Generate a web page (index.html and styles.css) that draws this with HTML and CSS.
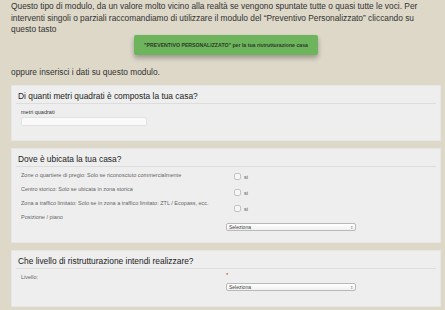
FILE: index.html
```html
<!DOCTYPE html>
<html lang="it">
<head>
    <meta charset="UTF-8">
    <meta name="viewport" content="width=device-width, initial-scale=1.0">
    <title>Preventivo ristrutturazione</title>
    <link rel="stylesheet" href="styles.css">
</head>
<body>
    <!-- Testo introduttivo -->
    <p class="intro">Questo tipo di modulo, da un valore molto vicino alla realtà se vengono spuntate tutte o quasi tutte le voci. Per<br>interventi singoli o parziali raccomandiamo di utilizzare il modulo del “Preventivo Personalizzato” cliccando su<br>questo tasto</p>

    <div class="cta-wrap">
        <button class="cta">"PREVENTIVO PERSONALIZZATO" per la tua ristrutturazione casa</button>
    </div>

    <p class="intro after">oppure inserisci i dati su questo modulo.</p>

    <!-- Metri quadrati -->
    <div class="panel">
        <div class="panel-head">Di quanti metri quadrati è composta la tua casa?</div>
        <div class="panel-body mq">
            <div class="field-label">metri quadrati</div>
            <div class="text-input"></div>
        </div>
    </div>

    <!-- Ubicazione -->
    <div class="panel">
        <div class="panel-head">Dove è ubicata la tua casa?</div>
        <div class="panel-body cols">
            <div class="col-left">
                <div class="row-label">Zone o quartiere di pregio: Solo se riconosciuto commercialmente</div>
                <div class="row-label">Centro storico: Solo se ubicata in zona storica</div>
                <div class="row-label">Zona a traffico limitato: Solo se in zona a traffico limitato: ZTL / Ecopass, ecc.</div>
                <div class="row-label">Posizione / piano</div>
            </div>
            <div class="col-right">
                <label class="check"><span class="box"></span>si</label>
                <label class="check"><span class="box"></span>si</label>
                <label class="check"><span class="box"></span>si</label>
                <div class="select"><span>Seleziona</span><span class="arrow">⇕</span></div>
            </div>
        </div>
    </div>

    <!-- Livello -->
    <div class="panel">
        <div class="panel-head">Che livello di ristrutturazione intendi realizzare?</div>
        <div class="panel-body cols level">
            <div class="col-left">
                <div class="row-label">Livello:</div>
            </div>
            <div class="col-right">
                <div class="required">*</div>
                <div class="select"><span>Seleziona</span><span class="arrow">⇕</span></div>
            </div>
        </div>
    </div>
</body>
</html>
```

FILE: styles.css
```css
/* Pagina */
body {
    margin: 0;
    padding: 1px 4px 0 11px;
    background-color: #ddd8c8;
    font-family: "Liberation Sans", Arial, sans-serif;
    color: #333;
}

/* Testo in alto */
.intro {
    margin: 0;
    font-size: 8.35px;
    line-height: 11.5px;
    white-space: nowrap;
}

.after {
    margin-top: 12px;
}

/* Tasto verde */
.cta-wrap {
    display: flex;
    justify-content: center;
    margin-top: -1px;
}

.cta {
    width: 184px;
    height: 20px;
    padding: 0;
    border: none;
    border-radius: 2px;
    background-color: #6db45d;
    color: #2c3a28;
    font-family: inherit;
    font-size: 5.2px;
    font-weight: bold;
    box-shadow: 0 3px 5px rgba(0, 0, 0, 0.3);
}

/* Riquadri */
.panel {
    margin-top: 7px;
    background-color: #eeeeee;
    border: 1px solid #e6e6e6;
}

.panel-head {
    margin: 0 4px;
    padding: 4px 2px 1px;
    border-bottom: 1px solid #dddddd;
    font-size: 8.4px;
    line-height: 12px;
    color: #222;
}

.panel-body {
    padding: 5px 9px 14px;
}

/* Metri quadrati */
.field-label {
    font-size: 5.5px;
    line-height: 7px;
    color: #333;
}

.text-input {
    width: 124px;
    height: 7px;
    margin-top: 1px;
    background-color: #fafafa;
    border: 1px solid #e2e2e2;
    border-radius: 2px;
}

/* Colonne */
.cols {
    display: flex;
    padding-bottom: 11px;
}

.col-left {
    width: 205px;
    display: flex;
    flex-direction: column;
    gap: 7px;
}

.row-label {
    font-size: 5.5px;
    line-height: 7px;
    color: #666;
    white-space: nowrap;
}

.col-right {
    display: flex;
    flex-direction: column;
    align-items: flex-start;
    padding-top: 1px;
}

.check {
    display: flex;
    align-items: center;
    gap: 3px;
    height: 7px;
    margin-bottom: 9px;
    padding-left: 8px;
    font-size: 5.5px;
    color: #555;
}

.box {
    width: 5px;
    height: 5px;
    border: 1px solid #c4c4c4;
    border-radius: 2px;
    background-color: #f7f7f7;
}

.select {
    width: 124px;
    height: 6px;
    margin-top: 2px;
    padding: 0 2px;
    display: flex;
    justify-content: space-between;
    align-items: center;
    background: linear-gradient(#ffffff, #f1f1f1);
    border: 1px solid #b9b9b9;
    border-radius: 2px;
    font-size: 5px;
    color: #444;
}

.arrow {
    font-size: 4px;
    color: #888;
}

/* Livello */
.level {
    padding-bottom: 15px;
}

.level .col-right {
    padding-top: 0;
}

.level .select {
    margin-top: 4px;
}

.required {
    height: 7px;
    margin-top: -2px;
    font-size: 6px;
    line-height: 7px;
    color: #c0392b;
}
```
